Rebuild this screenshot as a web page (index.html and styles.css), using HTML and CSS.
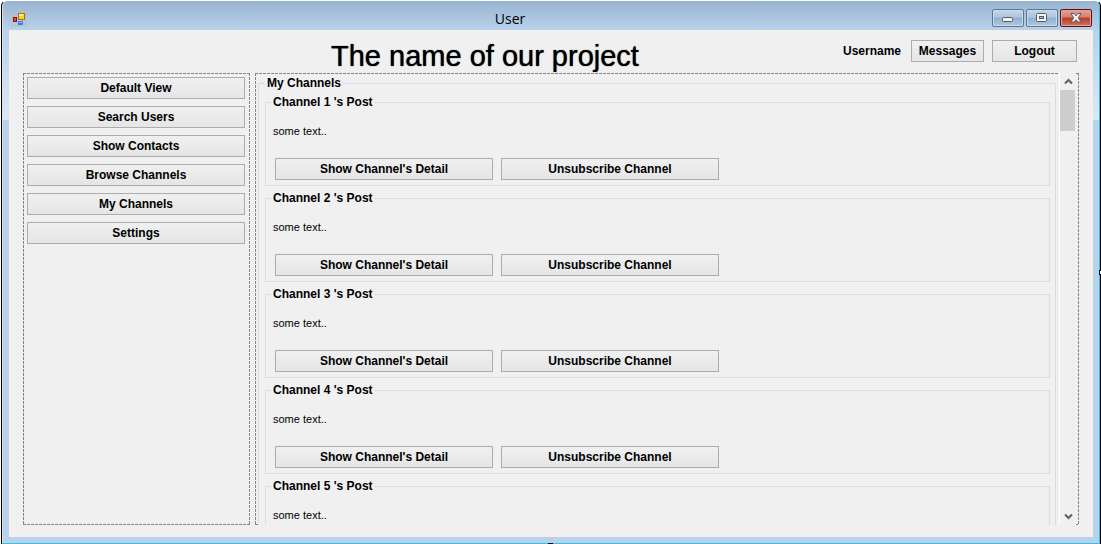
FILE: index.html
```html
<!DOCTYPE html>
<html lang="en">
<head>
<meta charset="utf-8">
<title>User</title>
<link rel="stylesheet" href="styles.css">
</head>
<body>
<div class="window">
  <header class="titlebar">
    <svg class="app-icon" width="14" height="14" viewBox="0 0 14 14" aria-hidden="true">
      <rect x="0.5" y="0.5" width="13" height="13" fill="none" stroke="#b9bcc2"/>
      <rect x="6.5" y="1.500" width="6" height="6" fill="#f8cf3c" stroke="#a87400"/>
      <rect x="7" y="2" width="4" height="2" fill="#ffeb9a"/>
      <rect x="1.500" y="5.500" width="3" height="4" fill="#e0503c" stroke="#8c1010"/>
      <rect x="6" y="9" width="5" height="4" fill="#3f7fdc"/>
      <rect x="7" y="10" width="3" height="1" fill="#8fbcf6"/>
    </svg>
    <div class="caption">User</div>
    <div class="controls">
      <button class="control" type="button" aria-label="Minimize">
        <svg width="12" height="12" viewBox="0 0 12 12"><rect x="0.5" y="5.500" width="10" height="4" rx="1" fill="#f4f4f4" stroke="#535a68"/></svg>
      </button>
      <button class="control" type="button" aria-label="Maximize">
        <svg width="12" height="12" viewBox="0 0 12 12"><rect x="0.5" y="1.500" width="10" height="8" rx="1" fill="#f4f4f4" stroke="#535a68"/><rect x="3.500" y="4.500" width="4" height="2" fill="#a5bddb" stroke="#535a68"/></svg>
      </button>
      <button class="control control-close" type="button" aria-label="Close">
        <svg width="12" height="12" viewBox="0 0 12 12"><path d="M1 1.500h3L6 3.800 8 1.500h3L8.300 5.800 11 10H8L6 7.800 4 10H1l2.700-4.200z" fill="#f4f4f4" stroke="#59556a"/></svg>
      </button>
    </div>
  </header>
  <div class="client">
    <div class="topbar">
      <h1 class="project">The name of our project</h1>
      <div class="account">
        <span class="username">Username</span>
        <button class="btn btn-messages" type="button">Messages</button>
        <button class="btn btn-logout" type="button">Logout</button>
      </div>
    </div>
    <div class="panels">
      <nav class="panel sidebar">
        <button class="btn" type="button">Default View</button>
        <button class="btn" type="button">Search Users</button>
        <button class="btn" type="button">Show Contacts</button>
        <button class="btn" type="button">Browse Channels</button>
        <button class="btn" type="button">My Channels</button>
        <button class="btn" type="button">Settings</button>
      </nav>
      <main class="panel content">
        <div class="viewport">
          <fieldset class="group channels">
            <legend>My Channels</legend>
            <fieldset class="group post">
              <legend>Channel 1 's Post</legend>
              <p>some text..</p>
              <div class="actions"><button class="btn" type="button">Show Channel's Detail</button><button class="btn" type="button">Unsubscribe Channel</button></div>
            </fieldset>
            <fieldset class="group post">
              <legend>Channel 2 's Post</legend>
              <p>some text..</p>
              <div class="actions"><button class="btn" type="button">Show Channel's Detail</button><button class="btn" type="button">Unsubscribe Channel</button></div>
            </fieldset>
            <fieldset class="group post">
              <legend>Channel 3 's Post</legend>
              <p>some text..</p>
              <div class="actions"><button class="btn" type="button">Show Channel's Detail</button><button class="btn" type="button">Unsubscribe Channel</button></div>
            </fieldset>
            <fieldset class="group post">
              <legend>Channel 4 's Post</legend>
              <p>some text..</p>
              <div class="actions"><button class="btn" type="button">Show Channel's Detail</button><button class="btn" type="button">Unsubscribe Channel</button></div>
            </fieldset>
            <fieldset class="group post">
              <legend>Channel 5 's Post</legend>
              <p>some text..</p>
            </fieldset>
          </fieldset>
        </div>
        <div class="scrollbar">
          <button class="arrow" type="button" aria-label="Scroll up"><svg width="9" height="7" viewBox="0 0 9 7"><path d="M1 5.500 4.500 2 8 5.500" fill="none" stroke="#606060" stroke-width="2"/></svg></button>
          <div class="thumb"></div>
          <button class="arrow arrow-down" type="button" aria-label="Scroll down"><svg width="9" height="7" viewBox="0 0 9 7"><path d="M1 1.500 4.500 5 8 1.500" fill="none" stroke="#606060" stroke-width="2"/></svg></button>
        </div>
      </main>
    </div>
  </div>
  <span class="grip grip-right"></span>
  <span class="grip grip-bottom"></span>
</div>
</body>
</html>
```
FILE: styles.css
```css
* {
  box-sizing: border-box;
}

body {
  margin: 0;
  background: #fff;
  font-family: "Liberation Sans", Arial, sans-serif;
  font-size: 12px;
  line-height: 14px;
  color: #000;
}

.window {
  position: relative;
  display: flex;
  flex-direction: column;
  height: 100vh;
  margin-left: 1px;
  padding: 0 7px 7px;
  border: solid #000;
  border-width: 1px 1px 0 1px;
  border-top-color: #fff;
  border-radius: 6px 6px 0 0;
  background:
    linear-gradient(#99b4d1, #b9d1ea) 0 0 / 100% 29px no-repeat,
    linear-gradient(#b9d1ea, #dbe8f6) 0 29px / 100% 90px no-repeat,
    #b9d1ea;
  box-shadow: inset -1px -1px #35c3dc, inset 1px 0 #dfe3e8;
}

.titlebar {
  display: flex;
  flex: none;
  align-items: center;
  height: 29px;
  padding: 0 1px 0 3px;
}

.app-icon {
  margin-top: 6px;
}

.caption {
  flex: 1;
  padding: 6px 0 0 2px;
  text-align: center;
  font: 14px/20px "Open Sans", sans-serif;
}

.caption,
.project {
  white-space: nowrap;
}

.controls {
  display: flex;
  gap: 2px;
  margin-top: 5px;
}

.control {
  display: flex;
  align-items: center;
  justify-content: center;
  width: 32px;
  height: 18px;
  padding: 0;
  border: 1px solid #5f7592;
  border-radius: 2px;
  background: linear-gradient(#c3d5e9, #aec5de 45%, #91afcf 50%, #b0c8e2);
  box-shadow: inset 0 0 0 1px #c9daed;
}

.control-close {
  border-color: #521414;
  background: linear-gradient(#e4a093, #d67f6e 45%, #b93a25 50%, #cf7560);
  box-shadow: inset 0 0 0 1px #e3a599;
}

.client {
  display: flex;
  flex: 1;
  flex-direction: column;
  min-height: 0;
  padding: 0 14px 12px;
  background: #f0f0f0;
}

.topbar {
  display: flex;
  flex: none;
  align-items: flex-start;
  height: 43px;
}

.project {
  flex: 1;
  margin: 10px 0 0;
  padding-left: 104px;
  text-align: center;
  font-size: 29px;
  line-height: 32px;
  font-weight: 400;
  text-shadow: 0 0 1px #000;
}

.account {
  display: flex;
  gap: 8px;
  align-items: center;
  margin: 10px 2px 0 0;
  font-weight: 700;
}

.username {
  margin-right: 2px;
}

.btn {
  height: 22px;
  padding: 0;
  border: 1px solid #acacac;
  background: linear-gradient(#f0f0f0, #e5e5e5);
  font: inherit;
  font-weight: 700;
  color: inherit;
}

.btn-messages {
  width: 73px;
}

.btn-logout {
  width: 85px;
}

.panels {
  display: grid;
  flex: 1;
  grid-template-columns: 227px 1fr;
  gap: 5px;
  min-height: 0;
}

.panel {
  min-height: 0;
  background:
    repeating-linear-gradient(90deg, #858585 0 3px, transparent 3px 4px) 0 0 / 100% 1px no-repeat,
    repeating-linear-gradient(90deg, #858585 0 3px, transparent 3px 4px) 0 100% / 100% 1px no-repeat,
    repeating-linear-gradient(#858585 0 3px, transparent 3px 4px) 0 0 / 1px 100% no-repeat,
    repeating-linear-gradient(#858585 0 3px, transparent 3px 4px) 100% 0 / 1px 100% no-repeat;
}

.sidebar {
  display: flex;
  flex-direction: column;
  gap: 7px;
  padding: 4px;
  padding-right: 5px;
}

.content {
  display: flex;
  padding: 1px 3px 0;
}

.viewport {
  flex: 1;
  min-width: 0;
  overflow: hidden;
  background: #f0f0f0;
}

.group {
  min-width: 0;
  margin: 0;
  border: 1px solid #dcdcdc;
}

.group > legend {
  height: 14px;
  margin-left: -2px;
  padding: 0 2px;
  font-weight: 700;
}

.channels {
  display: grid;
  gap: 5px;
  margin: 2px 3px 0 0;
  padding: 5px 5px 6px 6px;
}

.channels > legend {
  margin-left: 0;
}

.post {
  height: 91px;
  padding: 15px 7px 5px;
}

.post p {
  margin: 0 0 20px;
  font-size: 11px;
}

.actions {
  display: grid;
  grid-template-columns: repeat(2, 218px);
  gap: 8px;
  padding-left: 2px;
}

.scrollbar {
  display: flex;
  flex-direction: column;
  width: 17px;
  margin-top: -1px;
  border-left: 1px solid #fff;
  background: #f0f0f0;
}

.arrow {
  display: flex;
  align-items: center;
  justify-content: center;
  height: 17px;
  padding: 0;
  border: 0;
  background: none;
}

.arrow-down {
  margin-top: auto;
}

.thumb {
  width: 15px;
  height: 41px;
  background: #cdcdcd;
}

.grip {
  position: absolute;
  width: 5px;
  height: 5px;
  border: 1px solid #000;
  background: #fff;
}

.grip-right {
  top: calc(50% - 3px);
  right: -4px;
}

.grip-bottom {
  bottom: -4px;
  left: calc(50% - 3px);
}
```
